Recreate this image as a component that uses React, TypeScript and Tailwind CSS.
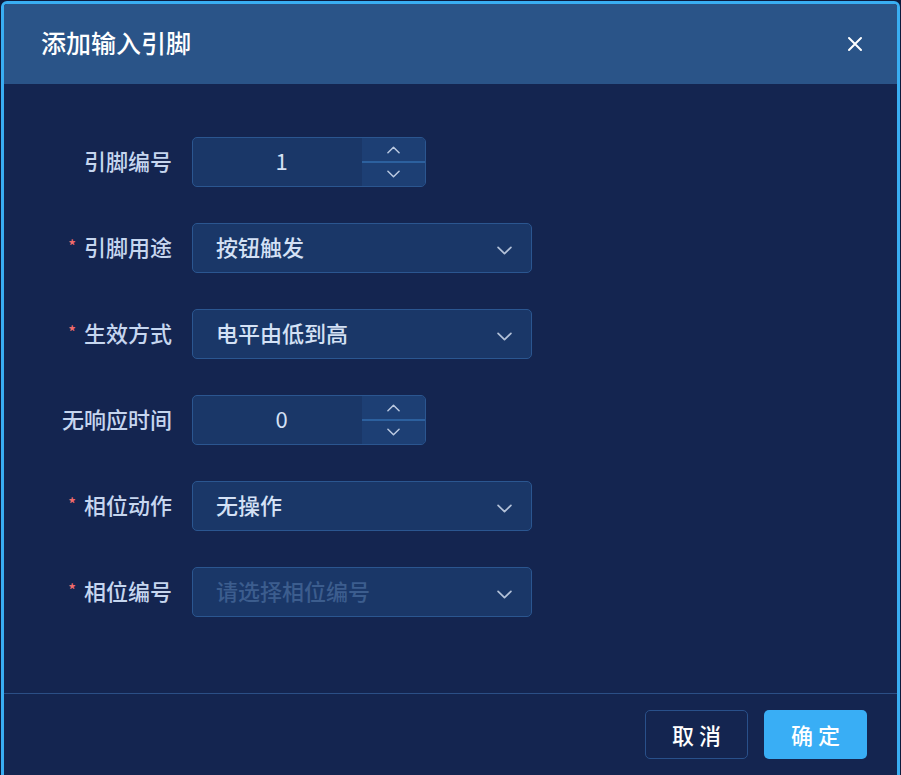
import React from 'react';

const FONT = { fontFamily: '"Noto Sans CJK SC", "Noto Sans", sans-serif' };

function Chevron({ up = false, className = '' }: { up?: boolean; className?: string }) {
  return (
    <svg viewBox="0 0 14 8" className={className} fill="none" stroke="currentColor" strokeWidth="1.6" strokeLinecap="round" strokeLinejoin="round">
      {up ? <path d="M1 7 L7 1 L13 7" /> : <path d="M1 1 L7 7 L13 1" />}
    </svg>
  );
}

function Label({ text, required = false }: { text: string; required?: boolean }) {
  return (
    <div className="w-[168px] shrink-0 flex items-center justify-end text-[22px] font-medium text-[#c6d6ef] mt-[-3px]">
      {required && <span className="text-[#f56c6c] text-[16px] mr-[8px] mt-[-4px]">*</span>}
      <span>{text}</span>
    </div>
  );
}

function NumberInput({ value }: { value: string }) {
  return (
    <div className="ml-[20px] w-[234px] h-[50px] flex rounded-[5px] border border-[#2b5690] bg-[#1a3768] overflow-hidden">
      <div className="flex-1 flex items-center justify-center pl-[8px] pb-[3px] text-[22px] text-[#d4e1f5]">{value}</div>
      <div className="w-[63px] flex flex-col bg-[#1d3f74]">
        <div className="flex-1 flex items-center justify-center text-[#b9c8e0] border-b-2 border-[#2c609e]">
          <Chevron up className="w-[13px] h-[8px] mt-[1px]" />
        </div>
        <div className="flex-1 flex items-center justify-center text-[#b9c8e0]">
          <Chevron className="w-[13px] h-[8px] mb-[2px]" />
        </div>
      </div>
    </div>
  );
}

function SelectInput({ value, placeholder }: { value?: string; placeholder?: string }) {
  return (
    <div className="ml-[20px] w-[340px] h-[50px] flex items-center rounded-[5px] border border-[#2b5690] bg-[#1a3768] pl-[23px] pr-[19px]">
      <span className={`flex-1 text-[22px] font-medium mt-[-4px] ${value ? 'text-[#d4e1f5]' : 'text-[#3c5d8e]'}`}>{value ?? placeholder}</span>
      <Chevron className="w-[15px] h-[9px] text-[#b3c1d8] mt-[4px]" />
    </div>
  );
}

export default function App() {
  return (
    <div className="w-[901px] h-[775px] overflow-hidden bg-[#0d1b3d] pt-[1px] pl-[1px]" style={FONT}>
      <div className="w-[899px] h-[790px] rounded-[6px] border-[3px] border-[#39aef3] bg-[#142550] flex flex-col overflow-hidden">
        {/* Header */}
        <div className="h-[80px] shrink-0 bg-[#2a5488] flex items-center justify-between pl-[37px] pr-[34px]">
          <span className="text-[25px] font-medium text-white mt-[-3px]">添加输入引脚</span>
          <svg viewBox="0 0 16 16" className="w-[16px] h-[16px] text-white" fill="none" stroke="currentColor" strokeWidth="2" strokeLinecap="round">
            <path d="M2 2 L14 14 M14 2 L2 14" />
          </svg>
        </div>

        {/* Body */}
        <div className="flex flex-col gap-[36px] pt-[53px] pb-[76px]">
          <div className="flex items-center">
            <Label text="引脚编号" />
            <NumberInput value="1" />
          </div>
          <div className="flex items-center">
            <Label text="引脚用途" required />
            <SelectInput value="按钮触发" />
          </div>
          <div className="flex items-center">
            <Label text="生效方式" required />
            <SelectInput value="电平由低到高" />
          </div>
          <div className="flex items-center">
            <Label text="无响应时间" />
            <NumberInput value="0" />
          </div>
          <div className="flex items-center">
            <Label text="相位动作" required />
            <SelectInput value="无操作" />
          </div>
          <div className="flex items-center">
            <Label text="相位编号" required />
            <SelectInput placeholder="请选择相位编号" />
          </div>
        </div>

        {/* Footer */}
        <div className="border-t border-[#2b4f86] flex justify-end gap-[16px] pt-[16px] pr-[30px]">
          <button className="w-[103px] h-[49px] rounded-[5px] border border-[#29508a] text-white text-[22px] font-medium tracking-[5px] pl-[5px]">取消</button>
          <button className="w-[103px] h-[49px] rounded-[5px] bg-[#39aef5] text-white text-[22px] font-medium tracking-[5px] pl-[5px]">确定</button>
        </div>
      </div>
    </div>
  );
}
